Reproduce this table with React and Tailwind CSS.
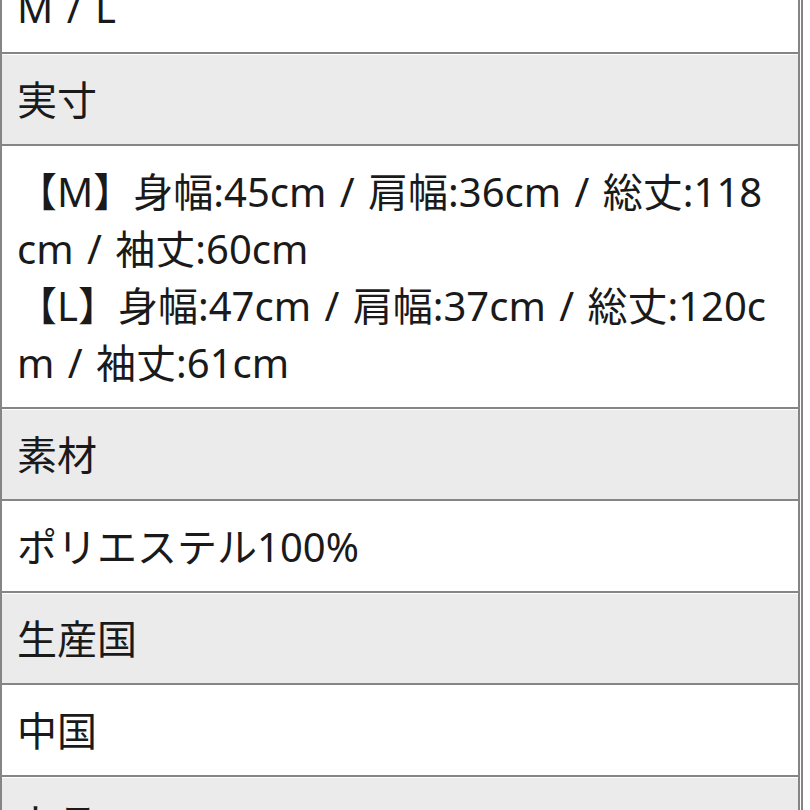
import React from 'react'

const rows = [
  { head: false, text: 'M / L' },
  { head: true, text: '実寸' },
  {
    head: false,
    text: '【M】身幅:45cm / 肩幅:36cm / 総丈:118cm / 袖丈:60cm\n【L】身幅:47cm / 肩幅:37cm / 総丈:120cm / 袖丈:61cm',
  },
  { head: true, text: '素材' },
  { head: false, text: 'ポリエステル100%' },
  { head: true, text: '生産国' },
  { head: false, text: '中国' },
  { head: true, text: 'カラー' },
]

export default function App() {
  return (
    <div
      className="w-[810px] h-[810px] overflow-hidden bg-white text-[#1a1a1a]"
      style={{ fontFamily: '"Noto Sans", "Noto Sans CJK JP", sans-serif' }}
    >
      <div className="-mt-[40px] w-[803px] border-r-2 border-[#858585] pr-px">
        {rows.map((row, i) => (
          <div key={i} className="border-l-2 border-r-2 border-t-2 border-[#858585]">
            <div
              className={
                'mt-px pl-[15px] pr-[22px] pt-4 pb-4 text-[40px] leading-[57px] [word-spacing:3px] whitespace-pre-line break-all ' +
                (row.head ? 'bg-[#ebebeb]' : 'bg-white')
              }
            >
              {row.text}
            </div>
          </div>
        ))}
      </div>
    </div>
  )
}
